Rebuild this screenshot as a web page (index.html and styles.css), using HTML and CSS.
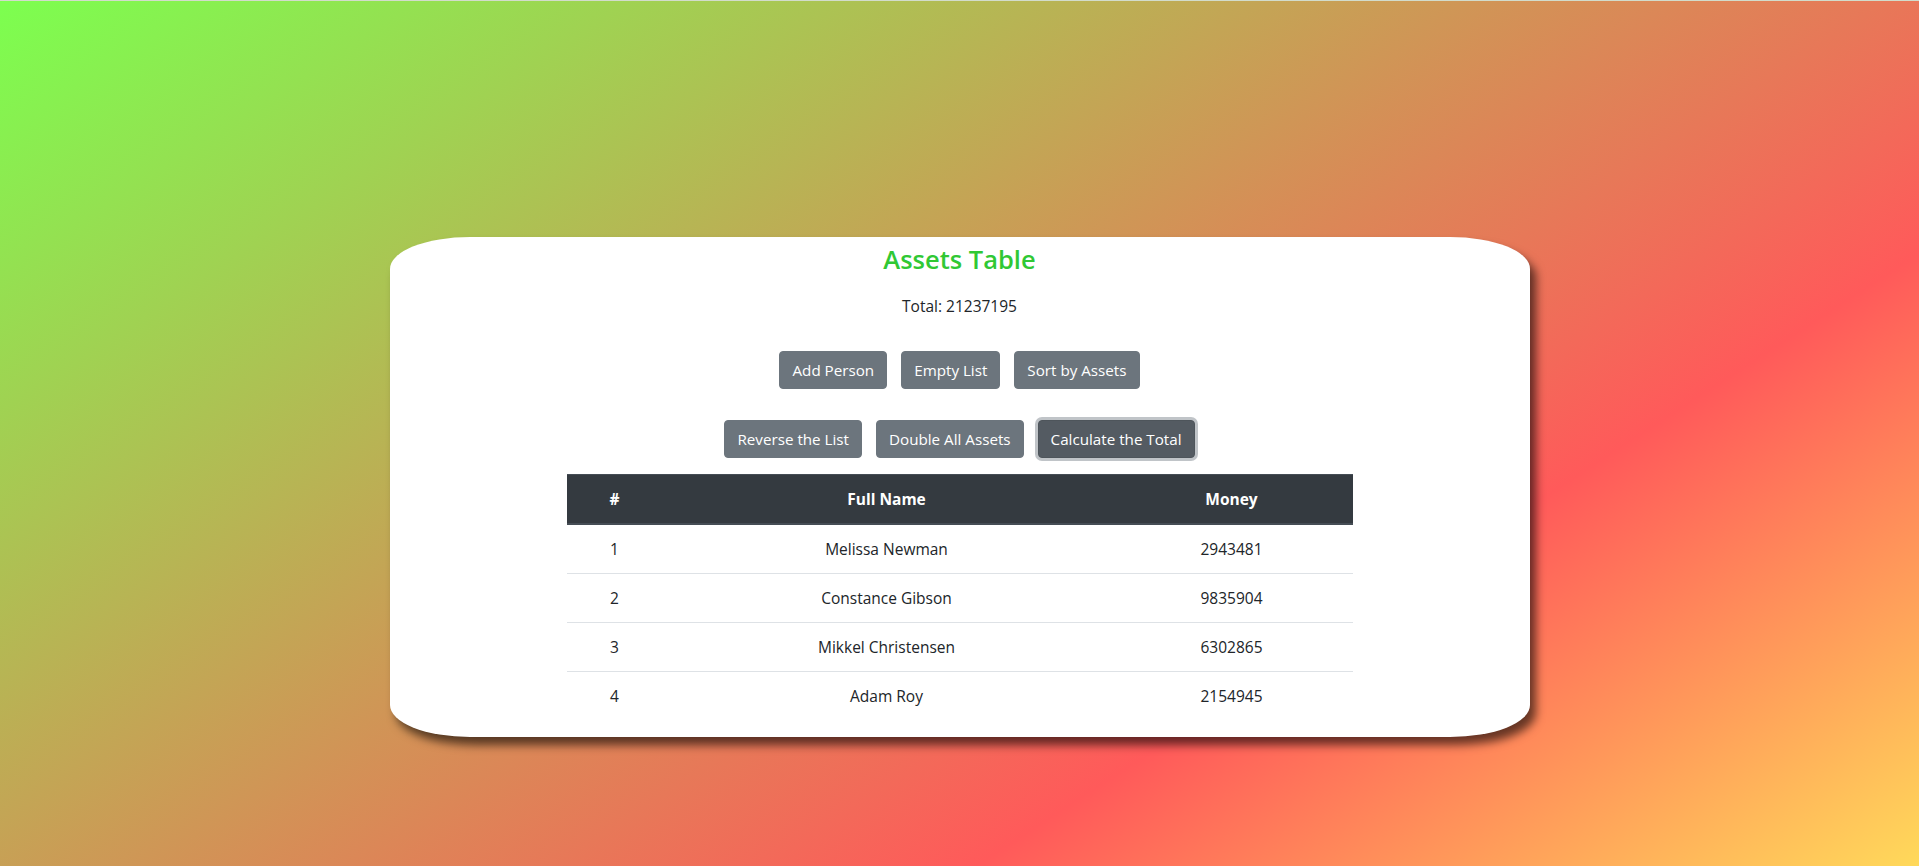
FILE: index.html
```html
<!DOCTYPE html>
<html lang="en">
<head>
<meta charset="utf-8">
<title>Assets Table</title>
<link rel="stylesheet" href="styles.css">
</head>
<body>
<div class="page">
  <div class="card">
    <h3 class="title">Assets Table</h3>
    <p class="total">Total: 21237195</p>
    <div class="btn-row row-1">
      <button class="btn">Add Person</button>
      <button class="btn">Empty List</button>
      <button class="btn">Sort by Assets</button>
    </div>
    <div class="btn-row row-2">
      <button class="btn">Reverse the List</button>
      <button class="btn">Double All Assets</button>
      <button class="btn btn-focus">Calculate the Total</button>
    </div>
    <table class="assets">
      <thead>
        <tr><th class="c-num">#</th><th class="c-name">Full Name</th><th class="c-money">Money</th></tr>
      </thead>
      <tbody>
        <tr><td>1</td><td>Melissa Newman</td><td>2943481</td></tr>
        <tr><td>2</td><td>Constance Gibson</td><td>9835904</td></tr>
        <tr><td>3</td><td>Mikkel Christensen</td><td>6302865</td></tr>
        <tr><td>4</td><td>Adam Roy</td><td>2154945</td></tr>
      </tbody>
    </table>
  </div>
</div>
</body>
</html>
```
FILE: styles.css
```css
* { box-sizing: border-box; }
html, body { margin: 0; padding: 0; }
body {
  min-height: 100vh;
  font-family: "Open Sans", "Noto Sans", sans-serif;
  font-size: 15.5px;
  color: #212529;
  background: linear-gradient(147deg, #7cff4f 0%, #ff5a5a 71%, #ffd95a 100%);
  border-top: 1px solid #d2dccb;
}
.page {
  display: flex;
  justify-content: center;
  padding-top: 236px;
}
.card {
  width: 1140px;
  background: #fff;
  border-radius: 80px / 32px;
  box-shadow: 6px 8px 10px rgba(0, 0, 0, 0.6);
  padding: 5px 0 17px;
  display: flex;
  flex-direction: column;
  align-items: center;
}
.title {
  margin: 0;
  font-size: 25.5px;
  font-weight: 600;
  line-height: 34px;
  color: #30c834;
}
.total {
  margin: 18px 0 0;
  line-height: 24px;
}
.btn-row {
  display: flex;
  justify-content: center;
  gap: 14px;
}
.row-1 { margin-top: 33px; }
.row-2 { margin-top: 31px; }
.btn {
  font-family: inherit;
  font-size: 15.2px;
  line-height: 24px;
  height: 38px;
  padding: 6px 12px;
  color: #fff;
  background: #6c757d;
  border: 1px solid #6c757d;
  border-radius: 4px;
}
.btn-focus {
  background: #545b62;
  border-color: #4e555b;
  box-shadow: 0 0 0 3px rgba(130, 138, 145, 0.5);
}
.assets {
  margin-top: 16px;
  width: 786px;
  border-collapse: collapse;
  text-align: center;
}
.assets th {
  background: #343a40;
  color: #fff;
  font-weight: 700;
  padding: 12px;
  line-height: 24px;
  border-top: 1px solid #454d55;
  border-bottom: 2px solid #454d55;
}
.assets td {
  padding: 12px;
  line-height: 24px;
  border-top: 1px solid #dee2e6;
}
.assets tbody tr:first-child td { border-top: none; }
.c-num { width: 96px; }
.c-name { width: 448px; }
.c-money { width: 242px; }
```
